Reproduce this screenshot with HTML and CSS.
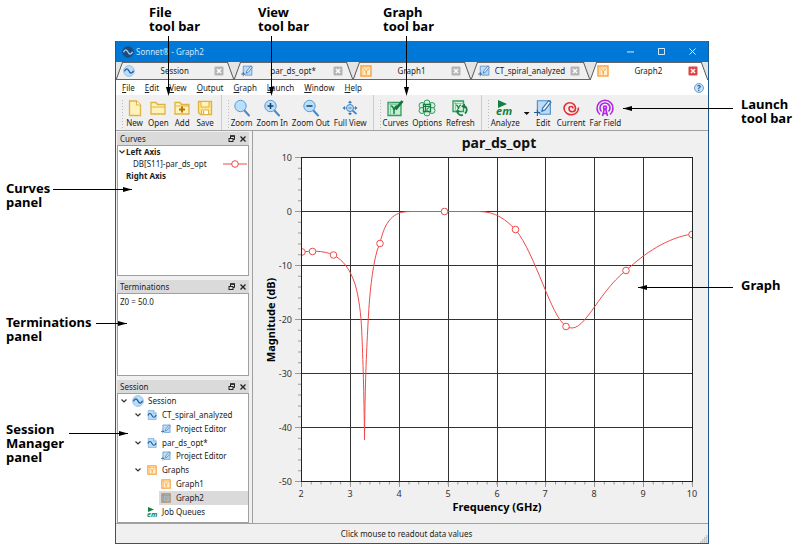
FILE: index.html
```html
<!DOCTYPE html>
<html lang="en">
<head>
    <meta charset="UTF-8">
    <meta name="viewport" content="width=device-width, initial-scale=1.0">
    <title>Sonnet - Graph2</title>
    <link rel="stylesheet" href="styles.css">
</head>
<body>
    <!-- Shared icons -->
    <svg class="sprite" aria-hidden="true">
        <symbol id="i-session" viewBox="0 0 12 12"><circle cx="6" cy="6" r="5.4" fill="#b9dcf8" stroke="#8ab9e0" stroke-width=".8"/><path d="M1.5 6.3C3 3 4.7 3.2 6 6S9 9 10.5 5.7" fill="none" stroke="#1d5797" stroke-width="1.3"/></symbol>
        <symbol id="i-project" viewBox="0 0 12 12"><path d="M1.5.5h6.500l3 3v8H1.500z" fill="#b9dcf8" stroke="#7fb4e2"/><path d="M8 .5v3h3" fill="#fff" stroke="#5d9bd2" stroke-width=".8"/><path d="M1 6.500C2.500 3.500 4.500 3.500 6 6.500s3.500 3 5-.5" fill="none" stroke="#1d5797" stroke-width="1.3"/></symbol>
        <symbol id="i-edit" viewBox="0 0 16 16"><path d="M3 1.500h11.500v12H5.500L3 11z" fill="#b9dcf8" stroke="#4d8ac6"/><path d="M7 11l.8-3L13 1.500l2 1.500-5.300 6.800z" fill="#e8f4ff" stroke="#356ba5"/><path d="M0 12h5.500M3 9.500v5.500" stroke="#27598f"/></symbol>
        <symbol id="i-graph" viewBox="0 0 12 12"><rect x="1" y="1" width="10" height="10" fill="#fff0cf" stroke="#f8a13c" stroke-width="1.4"/><path d="M3 1v10M1 3h10" stroke="#fbb968" stroke-width=".8"/><path d="M4 4.500c1.500 0 1.700 1.500 2.200 3C6.800 5.500 7 4.500 9 4.500M6.200 7v3" fill="none" stroke="#f8a13c"/></symbol>
        <symbol id="i-close" viewBox="0 0 10 10"><rect x=".5" y=".5" width="9" height="9" rx="1" fill="currentColor"/><path d="M3 3l4 4M7 3L3 7" stroke="#fff" stroke-width="1.5"/></symbol>
        <symbol id="i-float" viewBox="0 0 8 8"><path d="M2.500 3V1h4v3.500H5" fill="none" stroke="#222"/><path d="M2 1h5" stroke="#222" stroke-width="1.4"/><rect x="1" y="3.5" width="4" height="3" fill="none" stroke="#222"/></symbol>
        <symbol id="i-x" viewBox="0 0 8 8"><path d="M1.500 1.500l5 5M6.500 1.500l-5 5" stroke="#222" stroke-width="1.3"/></symbol>
        <symbol id="i-chevron" viewBox="0 0 8 8"><path d="M1.500 2.500L4 5l2.500-2.500" fill="none" stroke="#333" stroke-width="1.2"/></symbol>
        <symbol id="i-lens" viewBox="0 0 18 18"><path d="M11 11l5 5.500" stroke="#4c88c4" stroke-width="2" stroke-linecap="round"/><circle cx="7.5" cy="7" r="5.7" fill="#b9dffb" stroke="#5a9ad4"/></symbol>
    </svg>

    <div class="figure">
        <div class="callouts callouts-top">
            <div class="callout callout-file">File<br>tool bar</div>
            <div class="callout callout-view">View<br>tool bar</div>
            <div class="callout callout-graphbar">Graph<br>tool bar</div>
        </div>

        <div class="callouts callouts-left">
            <div class="callout callout-curves">Curves<br>panel</div>
            <div class="callout callout-terminations">Terminations<br>panel</div>
            <div class="callout callout-session">Session<br>Manager<br>panel</div>
        </div>

        <div class="window">
            <header class="titlebar">
                <svg class="icon-12" viewBox="0 0 12 12"><circle cx="6" cy="6" r="5.8" fill="#1c4c7c"/><path d="M1.500 6.300C3 3 4.700 3.200 6 6S9 9 10.500 5.700" fill="none" stroke="#a8d4f8" stroke-width="1.3"/></svg>
                <span class="title">Sonnet® - Graph2</span>
                <button class="win-button" aria-label="Minimize"><svg viewBox="0 0 8 8"><path d="M0 4.500h8" stroke="#fff"/></svg></button>
                <button class="win-button" aria-label="Maximize"><svg viewBox="0 0 8 8"><path d="M.5.5h7v7h-7z" fill="none" stroke="#fff"/></svg></button>
                <button class="win-button" aria-label="Close"><svg viewBox="0 0 8 8"><path d="M.5.5l7 7M7.500.5l-7 7" stroke="#fff"/></svg></button>
            </header>

            <div class="tabs">
                <div class="tab">
                    <svg class="icon-12"><use href="#i-session"/></svg>
                    <button class="tab-name">Session</button>
                    <button class="tab-close" aria-label="Close tab"><svg><use href="#i-close"/></svg></button>
                </div>
                <div class="tab">
                    <svg class="icon-12"><use href="#i-edit"/></svg>
                    <button class="tab-name">par_ds_opt*</button>
                    <button class="tab-close" aria-label="Close tab"><svg><use href="#i-close"/></svg></button>
                </div>
                <div class="tab">
                    <svg class="icon-12"><use href="#i-graph"/></svg>
                    <button class="tab-name">Graph1</button>
                    <button class="tab-close" aria-label="Close tab"><svg><use href="#i-close"/></svg></button>
                </div>
                <div class="tab">
                    <svg class="icon-12"><use href="#i-edit"/></svg>
                    <button class="tab-name">CT_spiral_analyzed</button>
                    <button class="tab-close" aria-label="Close tab"><svg><use href="#i-close"/></svg></button>
                </div>
                <div class="tab active">
                    <svg class="icon-12"><use href="#i-graph"/></svg>
                    <button class="tab-name">Graph2</button>
                    <button class="tab-close" aria-label="Close tab"><svg><use href="#i-close"/></svg></button>
                </div>
            </div>

            <nav class="menubar">
                <button><u>F</u>ile</button>
                <button><u>E</u>dit</button>
                <button><u>V</u>iew</button>
                <button><u>O</u>utput</button>
                <button><u>G</u>raph</button>
                <button><u>L</u>aunch</button>
                <button><u>W</u>indow</button>
                <button><u>H</u>elp</button>
                <button class="help" aria-label="What's this">?</button>
            </nav>

            <div class="toolbar">
                <div class="group">
                    <button class="tool"><svg viewBox="0 0 18 18"><path d="M3.500 2h7l4 4v10.500h-11z" fill="#fff3ba" stroke="#dfb245" stroke-width="1.3"/><path d="M10.500 2v4h4" fill="#fff" stroke="#dfb245"/></svg>New</button>
                    <button class="tool"><svg viewBox="0 0 18 18"><path d="M2 15V3.500h5l1.500 2H16V15z" fill="#fff3ba" stroke="#dfb245" stroke-width="1.3"/><path d="M2 8h14" stroke="#dfb245"/></svg>Open</button>
                    <button class="tool"><svg viewBox="0 0 18 18"><path d="M2 15V3.500h5l1.500 2H16V15z" fill="#fff3ba" stroke="#dfb245" stroke-width="1.3"/><path d="M2 7h14" stroke="#dfb245"/><path d="M9 7.500v6M6 10.500h6" stroke="#b87708" stroke-width="2"/></svg>Add</button>
                    <button class="tool"><svg viewBox="0 0 18 18"><path d="M2.500 2.500h13v13h-11l-2-2z" fill="#ffe68f" stroke="#dfb245" stroke-width="1.3"/><path d="M5 2.500h8v5.500H5z" fill="#fff3ba" stroke="#dfb245"/><path d="M5.500 11h7v4.500h-7z" fill="#fff" stroke="#dfb245"/><path d="M7.500 12v3" stroke="#dfb245" stroke-width="1.5"/></svg>Save</button>
                </div>
                <div class="group">
                    <button class="tool"><svg><use href="#i-lens"/></svg>Zoom</button>
                    <button class="tool"><svg viewBox="0 0 18 18"><use href="#i-lens"/><path d="M4.500 7h6M7.500 4v6" stroke="#1c3f66" stroke-width="1.5"/></svg>Zoom In</button>
                    <button class="tool"><svg viewBox="0 0 18 18"><use href="#i-lens"/><path d="M4.500 7h6" stroke="#1c3f66" stroke-width="1.5"/></svg>Zoom Out</button>
                    <button class="tool"><svg viewBox="0 0 18 18"><path d="M11 11l4.500 4" stroke="#4c88c4" stroke-width="1.800"/><path d="M9 1.500l2 2.500H7zM9 16.500l2-2.500H7zM1.500 9L4 7v4zM16.500 9L14 7v4z" fill="#3d78b5"/><path d="M3 9h12M9 3v12" stroke="#3d78b5" stroke-width=".8"/><circle cx="9" cy="9" r="3.5" fill="#b9dffb" stroke="#4584be"/><path d="M7.500 9h3" stroke="#3d78b5"/></svg>Full View</button>
                </div>
                <div class="group">
                    <button class="tool"><svg viewBox="0 0 18 18"><path d="M2 3.500h13v13H2z" fill="#c9ead3" stroke="#2f9d5e" stroke-width="1.3"/><path d="M4.500 3v13M2 5.500h13" stroke="#7cc397" stroke-width=".8"/><path d="M5 7c2 0 2.500 2 3 4.500C8.500 8.500 9 7 11 7M8 11v4" fill="none" stroke="#168044" stroke-width="1.5"/><path d="M9.500 10.500l7-8.500" stroke="#0f7238" stroke-width="2.600"/></svg>Curves</button>
                    <button class="tool"><svg viewBox="0 0 18 18"><g fill="#d7f0df" stroke="#2f9d5e"><circle cx="9" cy="4" r="3"/><circle cx="9" cy="14" r="3"/><circle cx="4" cy="6.5" r="3"/><circle cx="14" cy="6.5" r="3"/><circle cx="4" cy="11.5" r="3"/><circle cx="14" cy="11.5" r="3"/></g><path d="M5.500 5.500h7v7h-7z" fill="#d7f0df" stroke="#168044" stroke-width="1.300"/><path d="M7.500 5.500v7M5.500 7.500h7M9 12V9.500l2.500-1" fill="none" stroke="#168044"/></svg>Options</button>
                    <button class="tool"><svg viewBox="0 0 18 18"><path d="M2 2h10.500v10.500H2z" fill="#d7f0df" stroke="#2f9d5e" stroke-width="1.3"/><path d="M4.500 2v10.500M2 4.500h10.500" stroke="#7cc397" stroke-width=".8"/><path d="M5 6c2 0 2 2 2.500 4C8 7 8.500 6 10 6" fill="none" stroke="#168044" stroke-width="1.2"/><path d="M13 6.500c3.500 2 3.500 6 1 8M12 16c-3 1-5-1-5.500-3" fill="none" stroke="#168044" stroke-width="1.8"/><path d="M10 7.500l4-3v5zM4.500 13.500l2-3.500 3 3z" fill="#168044"/></svg>Refresh</button>
                </div>
                <div class="group">
                    <button class="tool"><svg viewBox="0 0 18 18"><path d="M2 1l9 4-9 4z" fill="#12803f"/><text x="0" y="16" class="em-text em-large">em</text></svg>Analyze</button>
                    <button class="drop" aria-label="Analyze options"></button>
                    <button class="tool"><svg viewBox="0 0 16 16"><use href="#i-edit"/></svg>Edit</button>
                    <button class="tool"><svg viewBox="0 0 18 18"><path d="M11 9.500A2 2 0 0 0 7 9.500A3.250 3.250 0 0 0 13.500 9.500A5.750 5.750 0 0 0 2 9.500A7.250 6.800 0 0 0 16.500 8.500" fill="none" stroke="#e62c36" stroke-width="1.600"/></svg>Current</button>
                    <button class="tool"><svg viewBox="0 0 18 18"><g fill="none" stroke="#ae23e6" stroke-width="1.600"><path d="M4 15.500a8 8 0 1 1 10 0"/><path d="M5.500 12.500a5 5 0 1 1 7 0"/><circle cx="9" cy="8.5" r="1.5"/><path d="M8.300 10L6.500 17M9.700 10l1.800 7M7 14.500h4"/></g></svg>Far Field</button>
                </div>
            </div>

            <main class="workspace">
                <div class="docks">
                    <section class="dock">
                        <h2><span>Curves</span><button aria-label="Float"><svg><use href="#i-float"/></svg></button><button aria-label="Close"><svg><use href="#i-x"/></svg></button></h2>
                        <ul class="dock-body curves">
                            <li class="axis"><svg class="icon-8"><use href="#i-chevron"/></svg>Left Axis</li>
                            <li class="curve">DB[S11]-par_ds_opt<svg class="legend" viewBox="0 0 24 8"><path d="M0 4h24" stroke="#f04a4a"/><circle cx="12" cy="4" r="3.3" fill="#fff" stroke="#f04a4a"/></svg></li>
                            <li class="axis last">Right Axis</li>
                        </ul>
                    </section>
                    <section class="dock">
                        <h2><span>Terminations</span><button aria-label="Float"><svg><use href="#i-float"/></svg></button><button aria-label="Close"><svg><use href="#i-x"/></svg></button></h2>
                        <div class="dock-body terminations">Z0 = 50.0</div>
                    </section>
                    <section class="dock">
                        <h2><span>Session</span><button aria-label="Float"><svg><use href="#i-float"/></svg></button><button aria-label="Close"><svg><use href="#i-x"/></svg></button></h2>
                        <ul class="dock-body tree">
                            <li><svg class="icon-8"><use href="#i-chevron"/></svg><svg class="icon-12"><use href="#i-session"/></svg>Session</li>
                            <li class="level-1"><svg class="icon-8"><use href="#i-chevron"/></svg><svg class="icon-10"><use href="#i-project"/></svg>CT_spiral_analyzed</li>
                            <li class="level-2"><svg class="icon-10"><use href="#i-edit"/></svg>Project Editor</li>
                            <li class="level-1"><svg class="icon-8"><use href="#i-chevron"/></svg><svg class="icon-10"><use href="#i-project"/></svg>par_ds_opt*</li>
                            <li class="level-2"><svg class="icon-10"><use href="#i-edit"/></svg>Project Editor</li>
                            <li class="level-1"><svg class="icon-8"><use href="#i-chevron"/></svg><svg class="icon-10"><use href="#i-graph"/></svg>Graphs</li>
                            <li class="level-2"><svg class="icon-10"><use href="#i-graph"/></svg>Graph1</li>
                            <li class="level-2 selected"><svg class="icon-10" viewBox="0 0 12 12"><rect x="1" y="1" width="10" height="10" fill="#a3bccb" stroke="#bb8a63" stroke-width="1.4"/><path d="M3 1v10M1 3h10M4 4.500c1.500 0 1.700 1.500 2.200 3C6.800 5.500 7 4.500 9 4.500M6.200 7v3" fill="none" stroke="#b88e70" stroke-width=".8"/></svg>Graph2</li>
                            <li class="level-1 leaf"><svg class="icon-10" viewBox="0 0 10 10"><path d="M1 0l6 2.500L1 5z" fill="#12803f"/><text x="0" y="10" class="em-text em-small">em</text></svg>Job Queues</li>
                        </ul>
                    </section>
                </div>

                <section class="graph">
                    <svg viewBox="0 0 455 392" role="img" aria-label="par_ds_opt">
                        <text class="plot-title" x="246" y="17">par_ds_opt</text>
                        <rect x="49" y="26" width="390" height="324" fill="#fff"/>
                        <!-- ticks -->
                        <g fill="none" stroke="#999">
                            <path d="M42 26.500h7M42 80.500h7M42 134.500h7M42 188.500h7M42 242.500h7M42 296.500h7M42 350.500h7"/>
                            <path d="M47 26v325" stroke-width="4" stroke-dasharray="1 9.8"/>
                            <path d="M48.500 351v5M97.500 351v5M146.500 351v5M195.500 351v5M244.500 351v5M292.500 351v5M341.500 351v5M390.500 351v5M439.500 351v5"/>
                            <path d="M48 352h392" stroke-width="3" stroke-dasharray="1 8.770"/>
                        </g>
                        <!-- grid -->
                        <path d="M97.500 26v324M146.500 26v324M195.500 26v324M244.500 26v324M292.500 26v324M341.500 26v324M390.500 26v324M49 80.500h390M49 134.500h390M49 188.500h390M49 242.500h390M49 296.500h390" fill="none" stroke="#333"/>
                        <rect x="48.5" y="26.5" width="391" height="324" fill="none" stroke="#222"/>
                        <!-- response curve -->
                        <clipPath id="plot-area"><rect x="49" y="26" width="390" height="325"/></clipPath>
                        <g clip-path="url(#plot-area)" fill="none" stroke="#f04a4a">
                            <path d="M49 121C56 120 70 119 80.500 124C90 129 97 138 102 153C106 166 108 184 108.700 199C110 230 111 260 111.500 309C112 260 113 230 114.700 199C116 170 118 148 122 128Q124 118 127 112C132 90 140 80.500 157 80.500H226C243 80.500 253 89 262.500 98.500C283 124 298 186 313 195C330 207 343 163 373 139.500C392 122 414 107 439 103"/>
                            <g fill="#fff">
                                <circle cx="49" cy="121" r="3.3"/>
                                <circle cx="59.5" cy="120.5" r="3.3"/>
                                <circle cx="80.5" cy="124" r="3.3"/>
                                <circle cx="127" cy="112.5" r="3.3"/>
                                <circle cx="191.5" cy="80.5" r="3.3"/>
                                <circle cx="262.5" cy="98.5" r="3.3"/>
                                <circle cx="313" cy="195.5" r="3.3"/>
                                <circle cx="373" cy="139.5" r="3.3"/>
                                <circle cx="439" cy="103.5" r="3.3"/>
                            </g>
                        </g>
                        <g class="scale-y">
                            <text x="39" y="30">10</text>
                            <text x="39" y="84">0</text>
                            <text x="39" y="138">-10</text>
                            <text x="39" y="192">-20</text>
                            <text x="39" y="246">-30</text>
                            <text x="39" y="300">-40</text>
                            <text x="39" y="354">-50</text>
                        </g>
                        <g class="scale-x">
                            <text x="48" y="366">2</text>
                            <text x="97" y="366">3</text>
                            <text x="146" y="366">4</text>
                            <text x="195" y="366">5</text>
                            <text x="244" y="366">6</text>
                            <text x="292" y="366">7</text>
                            <text x="341" y="366">8</text>
                            <text x="390" y="366">9</text>
                            <text x="439" y="366">10</text>
                        </g>
                        <text class="axis-title" x="244" y="380">Frequency (GHz)</text>
                        <text class="axis-title" transform="translate(22 189) rotate(-90)">Magnitude (dB)</text>
                    </svg>
                </section>
            </main>

            <footer class="statusbar">
                <span>Click mouse to readout data values</span>
                <svg class="grip" viewBox="0 0 8 8"><path d="M6 1h1.500M4 3h1.500M6 3h1.500M2 5h1.500M4 5h1.500M6 5h1.500M0 7h1.500M2 7h1.500M4 7h1.500M6 7h1.500" stroke="#bbb" stroke-width="1.4"/></svg>
            </footer>
        </div>

        <div class="callouts callouts-right">
            <div class="callout callout-launch">Launch<br>tool bar</div>
            <div class="callout callout-plot">Graph</div>
        </div>
    </div>
</body>
</html>
```
FILE: styles.css
```css
:root {
    --blue: #0078d7;
    --frame: #205a8c;
    --face: #f0f0f0;
    --header: #dadada;
    --line: #a0a0a0;
    --text: #222;
}

* {
    box-sizing: border-box;
}

body {
    margin: 0;
    background: #fff;
    color: var(--text);
    font-family: "Noto Sans", "Open Sans", sans-serif;
    font-size: 8px;
    line-height: 12px;
}

button {
    margin: 0;
    padding: 0;
    border: 0;
    background: none;
    color: inherit;
    font: inherit;
}

svg {
    display: block;
    flex: none;
}

ul {
    margin: 0;
    padding: 0;
    list-style: none;
}

.sprite {
    position: absolute;
    width: 0;
    height: 0;
}

.icon-8 {
    width: 8px;
    height: 8px;
}

.icon-10 {
    width: 10px;
    height: 10px;
    overflow: visible;
}

.icon-12 {
    width: 12px;
    height: 12px;
}

.em-text {
    font-family: "Noto Sans", sans-serif;
    font-style: italic;
    font-weight: bold;
    fill: #12803f;
}

.em-large {
    font-size: 11px;
}

.em-small {
    font-size: 7px;
}

.figure {
    display: grid;
    grid-template-columns: 115px 1fr 93px;
    grid-template-rows: 41px auto;
}

/* Callouts */
.callouts {
    display: flex;
    color: #000;
    font-size: 13px;
    font-weight: bold;
    line-height: 14px;
}

.callouts-top {
    grid-column: 2;
    padding: 5px 0 0 34px;
}

.callouts-left {
    grid-column: 1;
    grid-row: 2;
    flex-direction: column;
    align-items: flex-start;
    padding-left: 6px;
}

.callouts-right {
    grid-column: 3;
    grid-row: 2;
    flex-direction: column;
    align-items: flex-start;
    padding-left: 32px;
}

.callout {
    position: relative;
    white-space: nowrap;
}

.callout::before,
.callout::after {
    content: "";
    position: absolute;
    z-index: 2;
    background: #000;
}

.callouts-top .callout::before {
    top: 31px;
    left: var(--at);
    width: 1px;
    height: 52px;
}

.callouts-top .callout::after {
    top: 82px;
    left: calc(var(--at) - 2px);
    width: 5px;
    height: 9px;
    clip-path: polygon(0 0, 100% 0, 50% 100%);
}

.callouts-left .callout::before {
    top: var(--at);
    left: var(--from);
    width: var(--length);
    height: 1px;
}

.callouts-left .callout::after {
    top: calc(var(--at) - 2px);
    left: calc(var(--from) + var(--length) - 9px);
    width: 9px;
    height: 5px;
    clip-path: polygon(0 0, 100% 50%, 0 100%);
}

.callouts-right .callout::before {
    top: var(--at);
    right: calc(100% + 8px);
    width: var(--length);
    height: 1px;
}

.callouts-right .callout::after {
    top: calc(var(--at) - 2px);
    right: calc(100% + var(--length) - 1px);
    width: 9px;
    height: 5px;
    clip-path: polygon(100% 0, 0 50%, 100% 100%);
}

.callout-file {
    --at: 19px;
    width: 109px;
}

.callout-view {
    --at: 13px;
    width: 125px;
}

.callout-graphbar {
    --at: 23px;
}

.callout-curves {
    --at: 8px;
    --from: 47px;
    --length: 79px;
    margin-top: 140px;
}

.callout-terminations {
    --at: 8px;
    --from: 90px;
    --length: 31px;
    margin-top: 106px;
}

.callout-session {
    --at: 11px;
    --from: 63px;
    --length: 59px;
    margin-top: 79px;
}

.callout-launch {
    --at: 11px;
    --length: 110px;
    margin-top: 56px;
}

.callout-plot {
    --at: 9px;
    --length: 95px;
    margin-top: 153px;
}

/* Application window */
.window {
    grid-column: 2;
    grid-row: 2;
    min-width: 0;
    border: 1px solid var(--frame);
    border-top: 0;
    background: var(--face);
}

.titlebar {
    display: flex;
    align-items: center;
    height: 21px;
    padding-left: 6px;
    background: var(--blue);
    color: #cfe6fa;
}

.title {
    flex: 1;
    padding-left: 2px;
}

.win-button {
    display: grid;
    place-items: center;
    width: 31px;
    height: 21px;
}

.win-button svg {
    width: 7px;
    height: 7px;
}

.tabs {
    display: flex;
    height: 18px;
    border-bottom: 1px solid #666;
    background: #e4e4e4;
}

.tab {
    position: relative;
    z-index: 0;
    flex: 1;
    display: flex;
    align-items: center;
    min-width: 0;
    padding: 1px 10px 0 7px;
}

/* slanted tab sides */
.tab::before,
.tab::after {
    content: "";
    position: absolute;
    z-index: -1;
    top: 0;
    bottom: 0;
    border-top: 1px solid #666;
    background: var(--face);
}

.tab::before {
    left: 3px;
    right: 50%;
    border-left: 1px solid #555;
    transform: skewX(-20deg);
}

.tab::after {
    left: 45%;
    right: 3px;
    border-right: 1px solid #555;
    transform: skewX(20deg);
}

.tab.active::before,
.tab.active::after {
    bottom: -1px;
    background: #fff;
}

.tab-name {
    flex: 1;
    text-align: center;
    white-space: nowrap;
}

.tab-close {
    color: #b5b5b5;
}

.tab-close svg {
    width: 10px;
    height: 10px;
}

.active .tab-close {
    color: #e04343;
}

.menubar {
    display: flex;
    align-items: center;
    gap: 10px;
    height: 15px;
    padding: 0 4px 0 6px;
    background: #fff;
}

.help {
    width: 10px;
    height: 10px;
    margin-left: auto;
    border: 1px solid #6ba0d0;
    border-radius: 50%;
    background: #c5e2fa;
    color: #205a8c;
    font-weight: bold;
    line-height: 8px;
}

.toolbar {
    display: flex;
    height: 36px;
    border-bottom: 1px solid var(--line);
}

.group {
    display: flex;
    gap: 4px;
    padding: 4px 6px 0 5px;
    border-right: 1px solid #ccc;
}

.group:last-child {
    border-right: 0;
}

.group::before {
    content: "";
    width: 3px;
    height: 29px;
    margin-right: -3px;
    background: radial-gradient(circle, #bbb 1px, transparent 1px) 0 0 / 3px 3px;
}

.tool {
    display: flex;
    flex-direction: column;
    align-items: center;
    min-width: 19px;
    white-space: nowrap;
}

.tool svg {
    width: 18px;
    height: 18px;
    overflow: visible;
}

.drop {
    width: 6px;
    height: 3px;
    margin-top: 13px;
    background: #111;
    clip-path: polygon(0 0, 100% 0, 50% 100%);
}

.workspace {
    display: grid;
    grid-template-columns: 133px 1fr;
    column-gap: 3px;
}

.docks {
    display: grid;
    grid-template-rows: 144fr 96fr 143fr;
    row-gap: 4px;
    padding: 1px 0 0 1px;
}

.dock {
    display: flex;
    flex-direction: column;
    min-height: 0;
}

.dock h2 {
    display: flex;
    align-items: center;
    gap: 3px;
    height: 13px;
    margin: 0;
    padding: 0 2px 0 3px;
    background: var(--header);
    font-size: 8px;
    font-weight: normal;
}

.dock h2 span {
    flex: 1;
}

.dock h2 svg {
    width: 8px;
    height: 8px;
}

.dock-body {
    flex: 1;
    min-height: 0;
    border: 1px solid var(--line);
    background: #fff;
}

.curves li {
    display: flex;
    align-items: center;
}

.axis {
    font-weight: bold;
}

.axis.last {
    padding-left: 8px;
}

.curve {
    padding: 0 1px 0 15px;
}

.legend {
    width: 24px;
    height: 8px;
    margin-left: auto;
}

.terminations {
    padding: 2px;
}

.tree {
    display: grid;
    grid-auto-rows: 1fr;
    padding-bottom: 3px;
}

.tree li {
    display: flex;
    align-items: center;
    gap: 4px;
    padding-left: 2px;
    white-space: nowrap;
}

.tree .level-1 {
    padding-left: 16px;
    gap: 5px;
}

.tree .level-2 {
    margin-left: 41px;
    gap: 5px;
}

.tree .leaf {
    padding-left: 29px;
}

.tree .selected {
    background: var(--header);
}

.graph {
    min-width: 0;
    border-left: 1px solid var(--line);
}

.graph svg {
    width: 100%;
    height: auto;
}

.plot-title {
    fill: #111;
    font-size: 14px;
    font-weight: bold;
    text-anchor: middle;
}

.axis-title {
    fill: #000;
    font-size: 11px;
    font-weight: bold;
    text-anchor: middle;
}

.scale-x,
.scale-y {
    fill: #333;
    font-size: 9px;
}

.scale-x {
    text-anchor: middle;
}

.scale-y {
    text-anchor: end;
}

.statusbar {
    display: flex;
    align-items: center;
    height: 20px;
    border-top: 1px solid var(--line);
}

.statusbar span {
    flex: 1;
    padding-right: 3px;
    text-align: center;
}

.grip {
    width: 8px;
    height: 8px;
    align-self: flex-end;
}
```
